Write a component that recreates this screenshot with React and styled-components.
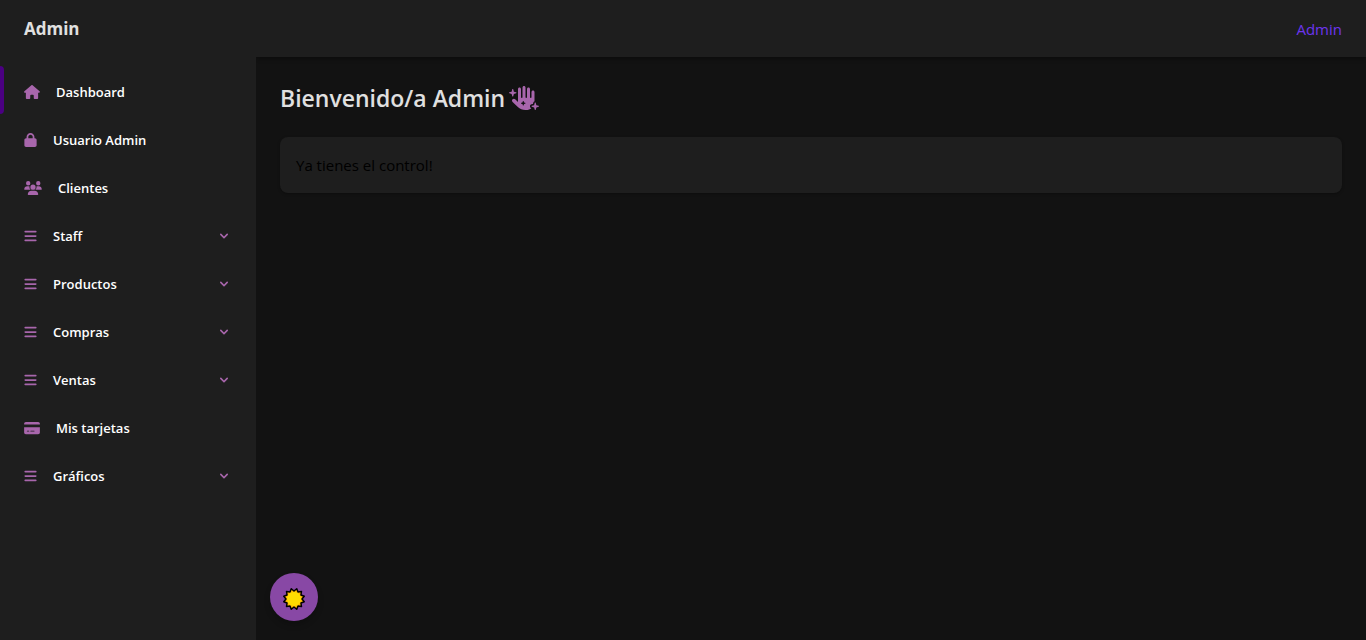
import React from "react";
import styled, { createGlobalStyle } from "styled-components";
import { FaHouse, FaLock, FaUsers, FaBars, FaCreditCard, FaHandSparkles } from "react-icons/fa6";

const GlobalStyle = createGlobalStyle`
  *, *::before, *::after { box-sizing: border-box; }
  body {
    margin: 0;
    background: #121212;
    font-family: "Segoe UI", "Open Sans", "Noto Sans", sans-serif;
    font-size: 15px;
    line-height: 24px;
  }
`;

const Layout = styled.div`
  display: flex;
  min-height: 100vh;
`;

const Sidebar = styled.aside`
  flex: 0 0 256px;
  padding: 15px 0;
  background: #1e1e1e;
`;

const Brand = styled.a`
  display: block;
  margin: 0 24px 23px;
  color: #e0e0e0;
  font-size: 17px;
  font-weight: 700;
  line-height: 28px;
  text-decoration: none;
`;

const Menu = styled.ul`
  margin: 0;
  padding: 0;
  list-style: none;
`;

const MenuItem = styled.li`
  position: relative;

  &::before {
    content: "";
    display: ${({ $active }) => ($active ? "block" : "none")};
    position: absolute;
    inset: 0 auto 0 0;
    width: 4px;
    border-radius: 0 8px 8px 0;
    background: #4b0082;
  }
`;

const MenuLink = styled.a`
  display: flex;
  align-items: center;
  width: 100%;
  height: 48px;
  padding: 4px 24px 0;
  border: 0;
  background: none;
  color: #ffffff;
  font-family: inherit;
  font-size: 13px;
  font-weight: 600;
  line-height: 20px;
  text-align: left;
  text-decoration: none;
  cursor: pointer;
`;

const MenuLabel = styled.span`
  flex: 1;
  margin-left: 16px;
`;

const IconBox = styled.span`
  display: flex;
  flex: none;
  width: ${({ $width }) => $width}px;
  height: 14px;
  color: #a866ac;

  svg {
    width: 100%;
    height: 100%;
  }
`;

const Chevron = styled.svg`
  width: 16px;
  height: 16px;
  color: #a866ac;
`;

const Page = styled.div`
  display: flex;
  flex: 1;
  flex-direction: column;
  min-width: 0;
`;

const Header = styled.header`
  display: flex;
  justify-content: flex-end;
  padding: 17px 24px 16px;
  background: #1e1e1e;
  box-shadow: 0 2px 4px rgba(0, 0, 0, 0.3);
  clip-path: inset(0 0 -8px 0);
`;

const UserLink = styled.a`
  color: #6d35ee;
  text-decoration: none;
`;

const Main = styled.main`
  padding: 25px 24px 24px;
`;

const Heading = styled.h1`
  display: flex;
  align-items: center;
  gap: 4px;
  margin: 0 0 23px;
  color: #e0e0e0;
  font-size: 23px;
  font-weight: 600;
  line-height: 32px;
`;

const HeadingIcon = styled.span`
  display: flex;
  width: 30px;
  height: 24px;
  color: #a866ac;

  svg {
    width: 100%;
    height: 100%;
  }
`;

const Card = styled.section`
  padding: 16px;
  border-radius: 8px;
  background: #1e1e1e;
  box-shadow: 0 1px 3px rgba(0, 0, 0, 0.3);
  color: #000000;
`;

const CardText = styled.p`
  margin: 0;
`;

const ThemeButton = styled.button`
  position: fixed;
  bottom: 19px;
  left: 270px;
  display: flex;
  align-items: center;
  justify-content: center;
  width: 48px;
  height: 48px;
  padding: 4px 0 0;
  border: 0;
  border-radius: 50%;
  background: #8848a5;
  box-shadow: 0 4px 6px rgba(0, 0, 0, 0.2);
  cursor: pointer;
`;

const items = [
  { label: "Dashboard", icon: FaHouse, iconWidth: 16, active: true },
  { label: "Usuario Admin", icon: FaLock, iconWidth: 13 },
  { label: "Clientes", icon: FaUsers, iconWidth: 18 },
  { label: "Staff", icon: FaBars, iconWidth: 13, expandable: true },
  { label: "Productos", icon: FaBars, iconWidth: 13, expandable: true },
  { label: "Compras", icon: FaBars, iconWidth: 13, expandable: true },
  { label: "Ventas", icon: FaBars, iconWidth: 13, expandable: true },
  { label: "Mis tarjetas", icon: FaCreditCard, iconWidth: 16 },
  { label: "Gráficos", icon: FaBars, iconWidth: 13, expandable: true },
];

const sunPoints = Array.from({ length: 24 }, (_, i) => {
  const radius = i % 2 ? 8 : 10.6;
  const angle = ((i + 1) * Math.PI) / 12;
  return `${12 + radius * Math.sin(angle)},${12 - radius * Math.cos(angle)}`;
}).join(" ");

function Sun() {
  return (
    <svg width="24" height="24" viewBox="0 0 24 24" aria-hidden="true">
      <polygon points={sunPoints} fill="#ffb900" stroke="#000000" strokeWidth="1.5" strokeLinejoin="round" />
      <circle cx="12" cy="12" r="7" fill="#ffdc00" />
    </svg>
  );
}

function NavItem({ label, icon: Icon, iconWidth, active, expandable }) {
  const linkProps = expandable
    ? { as: "button", type: "button", "aria-expanded": false }
    : { href: "#", "aria-current": active ? "page" : undefined };
  return (
    <MenuItem $active={active}>
      <MenuLink {...linkProps}>
        <IconBox $width={iconWidth}>
          <Icon aria-hidden="true" />
        </IconBox>
        <MenuLabel>{label}</MenuLabel>
        {expandable && (
          <Chevron viewBox="0 0 20 20" fill="currentColor" aria-hidden="true">
            <path
              fillRule="evenodd"
              clipRule="evenodd"
              d="M5.293 7.293a1 1 0 011.414 0L10 10.586l3.293-3.293a1 1 0 111.414 1.414l-4 4a1 1 0 01-1.414 0l-4-4a1 1 0 010-1.414z"
            />
          </Chevron>
        )}
      </MenuLink>
    </MenuItem>
  );
}

export default function App() {
  return (
    <>
      <GlobalStyle />
      <Layout>
        <Sidebar>
          <Brand href="#">Admin</Brand>
          <nav aria-label="Menú">
            <Menu>
              {items.map((item) => (
                <NavItem key={item.label} {...item} />
              ))}
            </Menu>
          </nav>
        </Sidebar>
        <Page>
          <Header>
            <UserLink href="#">Admin</UserLink>
          </Header>
          <Main>
            <Heading>
              Bienvenido/a Admin
              <HeadingIcon>
                <FaHandSparkles aria-hidden="true" />
              </HeadingIcon>
            </Heading>
            <Card>
              <CardText>Ya tienes el control!</CardText>
            </Card>
          </Main>
        </Page>
      </Layout>
      <ThemeButton type="button" aria-label="Cambiar tema">
        <Sun />
      </ThemeButton>
    </>
  );
}
